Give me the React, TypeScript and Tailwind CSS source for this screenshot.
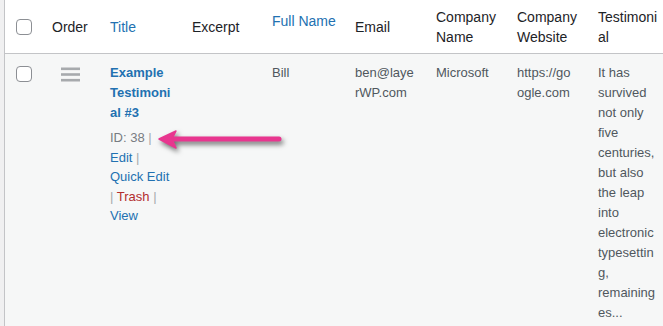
import React from "react";

const Check = () => (
  <input
    type="checkbox"
    readOnly
    className="appearance-none block w-4 h-4 rounded-[4px] border border-[#8c8f94] bg-white m-0"
  />
);

const Lines = ({ lines, className = "" }: { lines: string[]; className?: string }) => (
  <div className={className}>
    {lines.map((l, i) => (
      <div key={i} className="whitespace-nowrap">
        {l}
      </div>
    ))}
  </div>
);

const cols = "grid grid-cols-[37px_58px_82px_80px_83px_81px_81px_81px_81px]";

export default function App() {
  return (
    <div
      className="w-[663px] h-[326px] overflow-hidden flex bg-[#f0f0f1]"
      style={{ fontFamily: '"Liberation Sans", Arial, sans-serif' }}
    >
      <div className="w-[4px] shrink-0 bg-[#f0f0f1]" />
      <div className="flex-1 min-w-0 border-l border-[#c3c4c7] flex flex-col overflow-hidden">
        {/* header */}
        <div className={`${cols} h-[54px] shrink-0 bg-white border-b border-[#c3c4c7] text-[14px] leading-[20px] text-[#1d2327]`}>
          <div className="pl-[11px] flex items-center">
            <Check />
          </div>
          <div className="pl-[10px] flex items-center">Order</div>
          <div className="pl-[10px] flex items-center text-[#2271b1]">Title</div>
          <div className="pl-[10px] flex items-center">Excerpt</div>
          <div className="pl-[10px] pt-[11px] text-[#2271b1] whitespace-nowrap">Full Name</div>
          <div className="pl-[10px] flex items-center">Email</div>
          <div className="pl-[10px] flex items-center">
            <Lines lines={["Company", "Name"]} />
          </div>
          <div className="pl-[10px] flex items-center">
            <Lines lines={["Company", "Website"]} />
          </div>
          <div className="pl-[10px] flex items-center">
            <Lines lines={["Testimoni", "al"]} />
          </div>
        </div>
        {/* body */}
        <div className="relative flex-1 bg-[#f6f7f7]">
          <div className={`${cols} text-[13px] leading-[20px] text-[#50575e]`}>
            <div className="pl-[11px] pt-[12px]">
              <Check />
            </div>
            <div className="pl-[19px] pt-[13px]">
              <svg width="20" height="15" viewBox="0 0 20 15">
                <rect x="0" y="0.5" width="19" height="2.6" fill="#a7aaad" />
                <rect x="0" y="6.2" width="19" height="2.6" fill="#a7aaad" />
                <rect x="0" y="11.9" width="19" height="2.6" fill="#a7aaad" />
              </svg>
            </div>
            <div className="pl-[10px] pt-[9px]">
              <Lines
                className="font-semibold text-[#2271b1]"
                lines={["Example", "Testimoni", "al #3"]}
              />
              <div className="mt-[5px] leading-[19.5px]">
                <div className="whitespace-nowrap text-[#787c82]">
                  ID: 38 <span className="text-[#a7aaad]">|</span>
                </div>
                <div className="whitespace-nowrap text-[#2271b1]">
                  Edit <span className="text-[#a7aaad]">|</span>
                </div>
                <div className="whitespace-nowrap text-[#2271b1]">Quick Edit</div>
                <div className="whitespace-nowrap">
                  <span className="text-[#a7aaad]">|</span>{" "}
                  <span className="text-[#b32d2e]">Trash</span>{" "}
                  <span className="text-[#a7aaad]">|</span>
                </div>
                <div className="whitespace-nowrap text-[#2271b1]">View</div>
              </div>
            </div>
            <div className="pl-[10px] pt-[9px]" />
            <div className="pl-[10px] pt-[9px]">Bill</div>
            <div className="pl-[10px] pt-[9px]">
              <Lines lines={["ben@laye", "rWP.com"]} />
            </div>
            <div className="pl-[10px] pt-[9px]">Microsoft</div>
            <div className="pl-[10px] pt-[9px]">
              <Lines lines={["https://go", "ogle.com"]} />
            </div>
            <div className="pl-[10px] pt-[9px]">
              <Lines
                lines={[
                  "It has",
                  "survived",
                  "not only",
                  "five",
                  "centuries,",
                  "but also",
                  "the leap",
                  "into",
                  "electronic",
                  "typesettin",
                  "g,",
                  "remaining",
                  "es...",
                ]}
              />
            </div>
          </div>
          {/* annotation arrow */}
          <svg
            className="absolute left-[144px] top-[68px]"
            width="145"
            height="35"
            viewBox="0 0 145 35"
            style={{ filter: "drop-shadow(2px 3px 2.5px rgba(0,0,0,0.55))" }}
          >
            <line x1="24" y1="17" x2="130" y2="17" stroke="#e8368f" strokeWidth="5" strokeLinecap="round" />
            <path d="M10 17 L27 9 L23 17 L27 26 Z" fill="#e8368f" stroke="#e8368f" strokeWidth="1.5" strokeLinejoin="round" />
          </svg>
        </div>
      </div>
    </div>
  );
}
